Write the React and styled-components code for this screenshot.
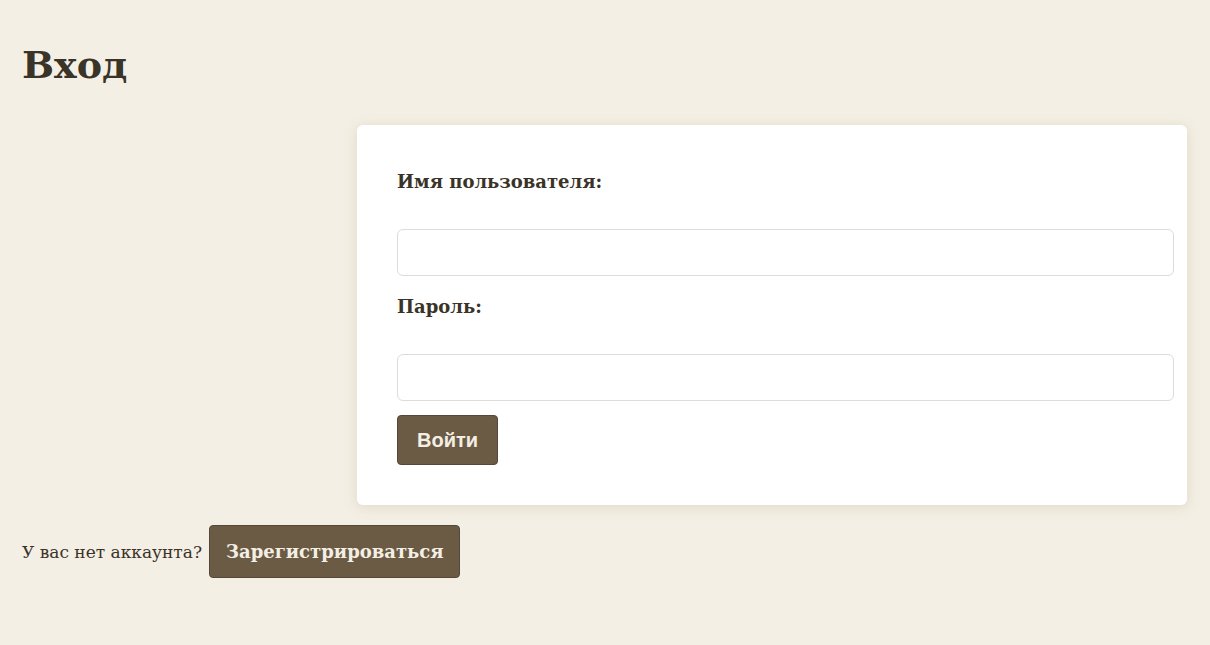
import React from 'react';
import styled, { createGlobalStyle } from 'styled-components';

const GlobalStyle = createGlobalStyle`
  html, body {
    margin: 0;
    padding: 0;
    background-color: #f4efe4;
  }
  body {
    font-family: "DejaVu Serif", "Liberation Serif", serif;
    color: #3a3328;
    font-size: 17px;
  }
`

export default function App() {
    return (
        <Page>
            <GlobalStyle />
            <Title>Вход</Title>
            <Card>
                <Label htmlFor="username">Имя пользователя:</Label>
                <Input id="username" type="text" />
                <Label htmlFor="password">Пароль:</Label>
                <Input id="password" type="password" />
                <SubmitButton type="button">Войти</SubmitButton>
            </Card>
            <Footer>
                <span>У вас нет аккаунта?</span>
                <RegisterButton type="button">Зарегистрироваться</RegisterButton>
            </Footer>
        </Page>
    )
}

const Page = styled.div`
    padding: 40px 23px 40px 22px;
    display: flex;
    flex-direction: column;
`

const Title = styled.h1`
    margin: 0 0 35px 0;
    font-size: 38px;
    font-weight: 700;
    line-height: 50px;
`

const Card = styled.form`
    margin-left: auto;
    width: 750px;
    padding: 40px;
    background-color: #ffffff;
    border-radius: 6px;
    box-shadow: 0 2px 14px rgba(120, 100, 60, 0.15);
    display: flex;
    flex-direction: column;
    align-items: flex-start;
`

const Label = styled.label`
    font-weight: 700;
    font-size: 18px;
    line-height: 30px;
    margin: 2px 0 32px 0;
`

const Input = styled.input`
    width: 751px;
    height: 21px;
    padding: 12px;
    border: 1px solid #dcdcdc;
    border-radius: 6px;
    font-size: 16px;
    margin-bottom: 14px;
    outline: none;
`

const SubmitButton = styled.button`
    width: 101px;
    height: 50px;
    background-color: #6b5b45;
    border: 1px solid #55483a;
    border-radius: 4px;
    color: #f4efe4;
    font-family: "Liberation Sans", Arial, sans-serif;
    font-weight: 700;
    font-size: 20px;
    cursor: pointer;
`

const Footer = styled.div`
    margin-top: 20px;
    display: flex;
    align-items: center;
    gap: 7px;
    font-size: 17px;
`

const RegisterButton = styled.button`
    height: 53px;
    padding: 0 15px 0 16px;
    background-color: #6b5b45;
    border: 1px solid #55483a;
    border-radius: 4px;
    color: #f4efe4;
    font-family: "DejaVu Serif", "Liberation Serif", serif;
    font-weight: 700;
    font-size: 18px;
    cursor: pointer;
`
